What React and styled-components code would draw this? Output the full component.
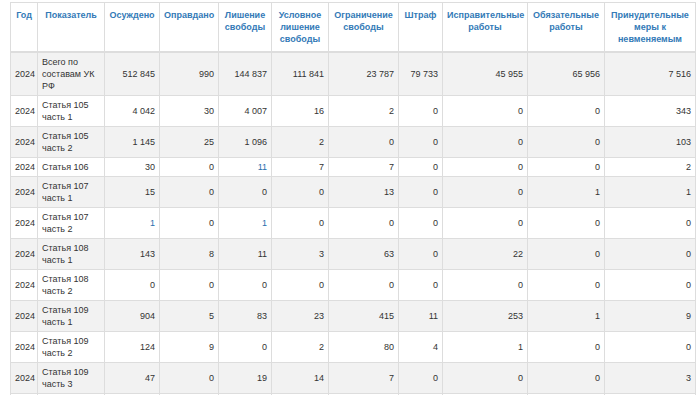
import React from 'react';
import styled, { createGlobalStyle } from 'styled-components';

const GlobalStyle = createGlobalStyle`
  html, body {
    margin: 0;
    padding: 0;
    background: #fff;
  }
  body {
    font-family: 'Liberation Sans', Arial, sans-serif;
    color: #333;
  }
`;

const Wrapper = styled.div`
  padding: 2px 5px 0 10px;
  width: 700px;
  height: 395px;
  box-sizing: border-box;
  overflow: hidden;
`;

const Table = styled.table`
  width: 685px;
  table-layout: fixed;
  border-collapse: collapse;
  font-size: 9px;
  line-height: 12px;
`;

const HeadCell = styled.th`
  color: #337ab7;
  font-weight: bold;
  text-align: center;
  vertical-align: top;
  padding: 6px 4px;
  border: 1px solid #ddd;
  border-bottom: 2px solid #ddd;
`;

const Row = styled.tr`
  background: ${p => (p.$striped ? '#f2f2f2' : '#fff')};
`;

const Cell = styled.td`
  padding: 3px 4px;
  border: 1px solid #ddd;
  vertical-align: middle;
  text-align: ${p => (p.$num ? 'right' : 'left')};
  color: ${p => (p.$link ? '#2a6ead' : '#333')};
`;

const columns = [
  { title: 'Год', width: 27 },
  { title: 'Показатель', width: 67 },
  { title: 'Осуждено', width: 55 },
  { title: 'Оправдано', width: 59 },
  { title: 'Лишение свободы', width: 53 },
  { title: 'Условное лишение свободы', width: 57 },
  { title: 'Ограничение свободы', width: 70 },
  { title: 'Штраф', width: 44 },
  { title: 'Исправительные работы', width: 85 },
  { title: 'Обязательные работы', width: 77 },
  { title: 'Принудительные меры к невменяемым', width: 91 },
];

// '*' marks a number shown as a link
const rows = [
  ['Всего по составам УК РФ', '512 845', '990', '144 837', '111 841', '23 787', '79 733', '45 955', '65 956', '7 516'],
  ['Статья 105 часть 1', '4 042', '30', '4 007', '16', '2', '0', '0', '0', '343'],
  ['Статья 105 часть 2', '1 145', '25', '1 096', '2', '0', '0', '0', '0', '103'],
  ['Статья 106', '30', '0', '*11', '7', '7', '0', '0', '0', '2'],
  ['Статья 107 часть 1', '15', '0', '0', '0', '13', '0', '0', '1', '1'],
  ['Статья 107 часть 2', '*1', '0', '*1', '0', '0', '0', '0', '0', '0'],
  ['Статья 108 часть 1', '143', '8', '11', '3', '63', '0', '22', '0', '0'],
  ['Статья 108 часть 2', '0', '0', '0', '0', '0', '0', '0', '0', '0'],
  ['Статья 109 часть 1', '904', '5', '83', '23', '415', '11', '253', '1', '9'],
  ['Статья 109 часть 2', '124', '9', '0', '2', '80', '4', '1', '0', '0'],
  ['Статья 109 часть 3', '47', '0', '19', '14', '7', '0', '0', '0', '3'],
  ['Статья 110 часть 1', '12', '0', '5', '4', '2', '0', '1', '0', '0'],
];

export default function App() {
  return (
    <Wrapper>
      <GlobalStyle />
      <Table>
        <colgroup>
          {columns.map(c => (
            <col key={c.title} style={{ width: c.width }} />
          ))}
        </colgroup>
        <thead>
          <tr>
            {columns.map(c => (
              <HeadCell key={c.title}>{c.title}</HeadCell>
            ))}
          </tr>
        </thead>
        <tbody>
          {rows.map((r, i) => (
            <Row key={i} $striped={i % 2 === 0}>
              <Cell>2024</Cell>
              <Cell>{r[0]}</Cell>
              {r.slice(1).map((v, j) => {
                const link = v.startsWith('*');
                return (
                  <Cell key={j} $num $link={link}>
                    {link ? v.slice(1) : v}
                  </Cell>
                );
              })}
            </Row>
          ))}
        </tbody>
      </Table>
    </Wrapper>
  );
}
